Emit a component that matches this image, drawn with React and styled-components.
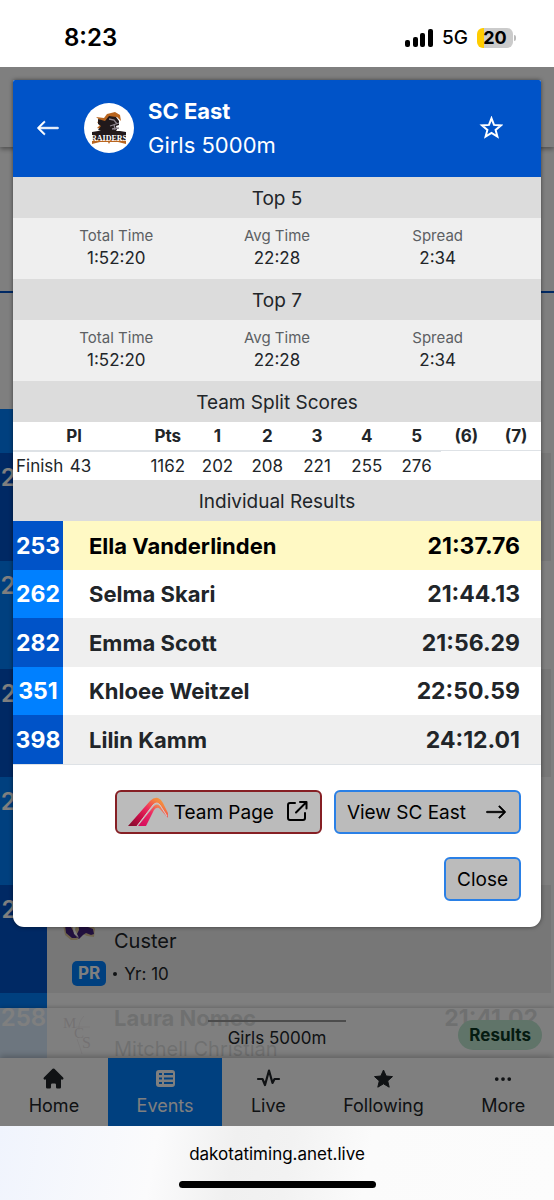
import React from 'react'
import styled, { createGlobalStyle, css } from 'styled-components'
import { BsArrowLeft, BsArrowRight, BsThreeDots } from 'react-icons/bs'
import { HiHome } from 'react-icons/hi'

const splits = [202, 208, 221, 255, 276]

const runners = [
    { place: 253, name: 'Ella Vanderlinden', time: '21:37.76', active: true },
    { place: 262, name: 'Selma Skari', time: '21:44.13' },
    { place: 282, name: 'Emma Scott', time: '21:56.29' },
    { place: 351, name: 'Khloee Weitzel', time: '22:50.59' },
    { place: 398, name: 'Lilin Kamm', time: '24:12.01' },
]

const entries = [
    { place: 253 },
    { place: 254 },
    { place: 255 },
    { place: 256 },
    { place: 257, team: 'Custer', year: 10, logo: 'custer' },
    { place: 258, name: 'Laura Nomec', team: 'Mitchell Christian', time: '21:41.02', logo: 'mcs' },
]

export default function App() {
    return (
        <Phone>
            <GlobalStyle />
            <StatusBar />
            <Screen>
                <EventPage />
                <Backdrop>
                    <TeamDialog />
                </Backdrop>
            </Screen>
            <BrowserBar>
                <Address>dakotatiming.anet.live</Address>
                <HomeIndicator />
            </BrowserBar>
        </Phone>
    )
}

function StatusBar() {
    return (
        <StatusWrapper>
            <Clock>8:23</Clock>
            <StatusIcons>
                <svg width="28" height="18" viewBox="0 0 28 18" aria-hidden="true">
                    <rect x="0" y="11" width="5" height="7" rx="2" />
                    <rect x="8" y="8" width="5" height="10" rx="2" />
                    <rect x="15" y="4" width="5" height="14" rx="2" />
                    <rect x="23" y="0" width="5" height="18" rx="2" />
                </svg>
                <Network>5G</Network>
                <BatteryWrapper>
                    <Battery>20</Battery>
                    <BatteryCap />
                </BatteryWrapper>
            </StatusIcons>
        </StatusWrapper>
    )
}

function EventPage() {
    return (
        <PageWrapper>
            <SiteHeader />
            <EventTabs />
            <Filters />
            <Content>
                <EntryList>
                    <ListHead />
                    {entries.map(entry => <Entry key={entry.place} {...entry} />)}
                </EntryList>
                <Sheet>
                    <SheetHandle />
                    <SheetTitle>Girls 5000m</SheetTitle>
                    <Results type="button">Results</Results>
                </Sheet>
            </Content>
            <Navbar />
        </PageWrapper>
    )
}

function Entry({ place, name, team, year, time, logo }) {
    return (
        <EntryRow>
            <EntryPlace>{place}</EntryPlace>
            <EntryInfo>
                <EntryLogo>
                    {logo === 'custer' && <CusterLogo />}
                    {logo === 'mcs' && <McsLogo />}
                </EntryLogo>
                <div>
                    <EntryName>{name}</EntryName>
                    <EntryTeam>{team}</EntryTeam>
                </div>
                <EntryTime>{time}</EntryTime>
                {year && (
                    <EntryMeta>
                        <Badge>PR</Badge>
                        <Bullet />
                        Yr: {year}
                    </EntryMeta>
                )}
            </EntryInfo>
        </EntryRow>
    )
}

function Navbar() {
    return (
        <NavWrapper>
            <NavLink href="#home"><HiHome size={25} />Home</NavLink>
            <NavLink href="#events" $active>
                <svg width="25" height="25" viewBox="0 0 25 25" aria-hidden="true">
                    <path fill="currentColor" fillRule="evenodd" d="M6 4h13a3 3 0 0 1 3 3v11a3 3 0 0 1-3 3H6a3 3 0 0 1-3-3V7a3 3 0 0 1 3-3zM6 7v2h3V7zM11 7v2h9V7zM6 11.500v2h3v-2zM11 11.500v2h9v-2zM6 16v2h3v-2zM11 16v2h9v-2z" />
                </svg>
                Events
            </NavLink>
            <NavLink href="#live">
                <svg width="25" height="25" viewBox="0 0 25 25" fill="none" stroke="currentColor" strokeWidth="2.200" strokeLinecap="round" strokeLinejoin="round" aria-hidden="true">
                    <path d="M2 13h4.500l2.500 6 4-14.500 3.500 12.500 2-4H23" />
                </svg>
                Live
            </NavLink>
            <NavLink href="#following">
                <svg width="25" height="25" viewBox="0 0 25 25" fill="currentColor" stroke="currentColor" strokeLinejoin="round" aria-hidden="true">
                    <path d="M12.500 4l2.700 6 6.300.6-4.800 4.300 1.500 6.300-5.700-3.400-5.700 3.400 1.500-6.300-4.800-4.300 6.300-.6z" />
                </svg>
                Following
            </NavLink>
            <NavLink href="#more">
                <DotsSlot><BsThreeDots size={20} /></DotsSlot>
                More
            </NavLink>
        </NavWrapper>
    )
}

function TeamDialog() {
    return (
        <Dialog role="dialog" aria-label="SC East">
            <DialogHeader>
                <IconButton type="button" aria-label="Back"><BsArrowLeft size={24} strokeWidth="0.500" /></IconButton>
                <Avatar><RaidersLogo /></Avatar>
                <Heading>
                    <TeamName>SC East</TeamName>
                    <EventName>Girls 5000m</EventName>
                </Heading>
                <IconButton type="button" aria-label="Follow">
                    <svg width="24" height="24" viewBox="0 0 24 24" fill="none" stroke="currentColor" strokeWidth="2" aria-hidden="true">
                        <path d="M12.500 2.300l2.500 6.600 7 .5-5.400 4.500 1.800 6.700-5.900-3.700-5.900 3.700 1.800-6.700L3 9.400l7-.5z" />
                    </svg>
                </IconButton>
            </DialogHeader>
            <SectionTitle>Top 5</SectionTitle>
            <Stats />
            <SectionTitle>Top 7</SectionTitle>
            <Stats />
            <SectionTitle>Team Split Scores</SectionTitle>
            <SplitTable>
                <colgroup>
                    <col style={{ width: '10.2%' }} />
                    <col style={{ width: '14.4%' }} />
                </colgroup>
                <thead>
                    <tr>
                        <PlaceHead colSpan={2}>Pl</PlaceHead>
                        <th>Pts</th>
                        <th>1</th>
                        <th>2</th>
                        <th>3</th>
                        <th>4</th>
                        <th>5</th>
                        <th>(6)</th>
                        <th>(7)</th>
                    </tr>
                </thead>
                <tbody>
                    <tr>
                        <LeftCell>Finish</LeftCell>
                        <LeftCell>43</LeftCell>
                        <td>1162</td>
                        {splits.map(split => <td key={split}>{split}</td>)}
                    </tr>
                </tbody>
            </SplitTable>
            <SectionTitle>Individual Results</SectionTitle>
            <ResultTable>
                <tbody>
                    {runners.map(runner => (
                        <ResultRow key={runner.place} $active={runner.active}>
                            <PlaceCell>{runner.place}</PlaceCell>
                            <NameCell>{runner.name}</NameCell>
                            <TimeCell>{runner.time}</TimeCell>
                        </ResultRow>
                    ))}
                </tbody>
            </ResultTable>
            <DialogFooter>
                <Button type="button" $red>
                    <AthleticLogo />
                    Team Page
                    <ShareIcon />
                </Button>
                <Button type="button">
                    View SC East
                    <ArrowSlot><BsArrowRight size={22} strokeWidth="0.500" /></ArrowSlot>
                </Button>
                <Button type="button">Close</Button>
            </DialogFooter>
        </Dialog>
    )
}

function Stats() {
    return (
        <StatsWrapper>
            <div><dt>Total Time</dt><dd>1:52:20</dd></div>
            <div><dt>Avg Time</dt><dd>22:28</dd></div>
            <div><dt>Spread</dt><dd>2:34</dd></div>
        </StatsWrapper>
    )
}

function RaidersLogo() {
    return (
        <svg width="34" height="34" viewBox="0 0 34 34" aria-hidden="true">
            <path fill="#b8651f" d="M4 6l8 1 3-4 8-2 5 3 1 6-4-4-8 1-4 5 1 5-6 6 1-5-4-1 3-3-3-3 4-1z" />
            <path fill="#21191b" d="M6 8l7 2 4-5 7 1 3 4v4l-3 1 1 4-5 4H11l-6 2 4-5-3-1 3-4-3-2z" />
            <path fill="none" stroke="#8f8790" strokeWidth="1.300" d="M17 8l5 1 3 4M18 15l9-3M20 18l7-1M22 13l1 6" />
            <path fill="#21191b" d="M0 21l6-1h22l6 1v9H0z" />
            <path fill="#b8651f" d="M0 29h34v4l-8-2h-8l-1 2-1-2H8l-8 2z" />
            <LogoText x="17" y="30" textAnchor="middle">RAIDERS</LogoText>
        </svg>
    )
}

function CusterLogo() {
    return (
        <svg width="34" height="34" viewBox="0 0 34 34" aria-hidden="true">
            <path fill="#dcc79a" d="M1 18l4-8 10-4 12 4 6 12-1 8-7-1-4-2-6 6H9l-6-5z" />
            <path fill="#43217c" d="M3 18l4-8 3 2-1 8 6 11h-5l-6-5z" />
            <path fill="#43217c" d="M16 12l7-1 6 5-3 4 5 2 1 5-3 1-5-2-3 2-4 4-3-3 3-6z" />
            <path fill="#fff" d="M10 16l5-2-2 9 4 8-5-4z" />
        </svg>
    )
}

function McsLogo() {
    return (
        <McsSvg width="34" height="40" viewBox="0 0 34 40" aria-hidden="true">
            <text x="1" y="13" fontSize="15">M</text>
            <text x="12" y="23" fontSize="15">C</text>
            <text x="20" y="33" fontSize="16">S</text>
            <path fill="none" stroke="currentColor" strokeWidth="0.500" d="M14 12h14M22 1q-6 6-5 14M15 24q3 8 5 15" />
        </McsSvg>
    )
}

function AthleticLogo() {
    return (
        <svg width="40" height="30" viewBox="0 0 40 30" aria-hidden="true">
            <defs>
                <linearGradient id="outer" x1="0" y1="1" x2="1" y2="0">
                    <stop offset="0" stopColor="#7d0b2a" />
                    <stop offset="0.300" stopColor="#c60c46" />
                    <stop offset="0.550" stopColor="#ee2b5d" />
                    <stop offset="0.800" stopColor="#f5853f" />
                    <stop offset="1" stopColor="#f0a73c" />
                </linearGradient>
                <linearGradient id="inner" x1="0" y1="1" x2="0.800" y2="0">
                    <stop offset="0" stopColor="#d3095c" />
                    <stop offset="0.600" stopColor="#ec2b63" />
                    <stop offset="1" stopColor="#f79a49" />
                </linearGradient>
            </defs>
            <path fill="url(#outer)" d="M0 29L22 4q4-4 8-3 3 1 5 5l5 10v5l-8-13q-3-4-7 0L9 29z" />
            <path fill="url(#inner)" d="M10 29L26 9q3-3 6 0l7 11-7-8q-3-3-6 1L18 29z" />
            <path fill="none" stroke="#d9c4c4" d="M9 29L25 8q4-4 7 0l7 11" />
        </svg>
    )
}

function ShareIcon() {
    return (
        <svg width="22" height="22" viewBox="0 0 22 22" fill="none" stroke="currentColor" strokeWidth="2" strokeLinecap="round" strokeLinejoin="round" aria-hidden="true">
            <path d="M9 2H4a2 2 0 0 0-2 2v13a2 2 0 0 0 2 2h13a2 2 0 0 0 2-2v-5M14 1h6.500v6.500M20 1.500L10 11.500" />
        </svg>
    )
}

const GlobalStyle = createGlobalStyle`
    *{
        box-sizing: border-box;
    }
    body{
        margin: 0;
        background: #fff;
        color: #212529;
        font-family: Inter, "Liberation Sans", sans-serif;
    }
    button{
        font-family: inherit;
    }
    svg{
        flex: none;
    }
`

const Phone = styled.div`
    display: flex;
    flex-direction: column;
    height: 100vh;
`

const StatusWrapper = styled.header`
    display: flex;
    justify-content: space-between;
    align-items: center;
    height: 67px;
    padding: 8px 38px 0 64px;
    color: #000;
`

const Clock = styled.span`
    font-size: 24px;
    font-weight: 600;
`

const StatusIcons = styled.div`
    display: flex;
    align-items: center;
    gap: 9px;
`

const Network = styled.span`
    font-size: 19px;
    font-weight: 500;
`

const BatteryWrapper = styled.div`
    display: flex;
    align-items: center;
    gap: 1px;
`

const Battery = styled.span`
    width: 36px;
    border-radius: 6px;
    background: linear-gradient(to right, #ffcc00 20%, #cbcbcb 20%);
    font-size: 18px;
    font-weight: 700;
    line-height: 20px;
    text-align: center;
`

const BatteryCap = styled.span`
    width: 2px;
    height: 6px;
    border-radius: 0 2px 2px 0;
    background: #bbb;
`

const Screen = styled.main`
    display: grid;
    grid-template: minmax(0, 1fr) / minmax(0, 1fr);
    flex: 1;
    min-height: 0;
    overflow: hidden;
    > *{
        grid-area: 1 / 1;
    }
`

const Backdrop = styled.div`
    z-index: 1;
    padding: 13px;
    background: rgba(0, 0, 0, 0.5);
    overflow: auto;
`

const PageWrapper = styled.div`
    display: flex;
    flex-direction: column;
    min-height: 0;
`

const SiteHeader = styled.div`
    flex: none;
    height: 80px;
    box-shadow: 0 2px 5px rgba(0, 0, 0, 0.4);
`

const EventTabs = styled.div`
    flex: none;
    height: 146px;
    border-bottom: 2px solid #0053c8;
`

const Filters = styled.div`
    flex: none;
    height: 116px;
`

const Content = styled.div`
    display: grid;
    grid-template: minmax(0, 1fr) / minmax(0, 1fr);
    flex: 1;
    min-height: 0;
    overflow: hidden;
    > *{
        grid-area: 1 / 1;
    }
`

const EntryList = styled.div`
    padding-right: 3px;
    overflow: hidden;
`

const ListHead = styled.div`
    width: 47px;
    height: 44px;
    background: #0080ff;
`

const EntryPlace = styled.div`
    width: 47px;
    padding-top: 10px;
    background: #0080ff;
    color: #fff;
    font-size: 24px;
    font-weight: 600;
    line-height: 30px;
    text-align: center;
`

const EntryRow = styled.div`
    display: flex;
    height: 108px;
    &:nth-child(even){
        background: #efefef;
    }
    &:nth-child(even) ${EntryPlace}{
        background: #0053c8;
    }
`

const EntryInfo = styled.div`
    display: grid;
    grid-template-columns: 67px 1fr auto;
    align-content: start;
    flex: 1;
    padding: 10px 13px 0 0;
`

const EntryLogo = styled.div`
    display: flex;
    justify-content: center;
    padding: 12px 3px 0 0;
`

const EntryName = styled.div`
    min-height: 30px;
    font-size: 22px;
    font-weight: 700;
    line-height: 30px;
`

const EntryTime = styled(EntryName)`
    font-size: 23px;
`

const EntryTeam = styled.div`
    min-height: 32px;
    font-size: 20px;
    line-height: 32px;
`

const EntryMeta = styled.div`
    display: flex;
    align-items: center;
    grid-column: 1 / -1;
    gap: 7px;
    padding: 4px 0 0 25px;
    font-size: 17px;
`

const Badge = styled.span`
    padding: 0 6px;
    border-radius: 5px;
    background: #0080ff;
    color: #fff;
    font-weight: 700;
    line-height: 25px;
`

const Bullet = styled.span`
    width: 4px;
    height: 4px;
    border-radius: 50%;
    background: #212529;
`

const McsSvg = styled.svg`
    color: #5c3844;
    fill: #5c3844;
    font-family: "Liberation Serif", serif;
`

const Sheet = styled.div`
    display: grid;
    grid-template-columns: 1fr auto 1fr;
    align-self: end;
    align-content: start;
    height: 50px;
    padding: 12px 12px 0;
    background: rgba(255, 255, 255, 0.86);
    box-shadow: 0 -1px 4px rgba(0, 0, 0, 0.2);
`

const SheetHandle = styled.div`
    grid-area: 1 / 2;
    justify-self: center;
    width: 138px;
    height: 2px;
    background: #999;
`

const SheetTitle = styled.span`
    grid-area: 1 / 2;
    padding-top: 6px;
    font-size: 17px;
    line-height: 24px;
    text-align: center;
`

const Results = styled.button`
    grid-area: 1 / 3;
    justify-self: end;
    padding: 0 11px;
    border: 0;
    border-radius: 15px;
    background: #c0e8d2;
    color: #0a3622;
    font-size: 17px;
    font-weight: 700;
    line-height: 29px;
`

const NavWrapper = styled.nav`
    display: flex;
    flex: none;
    height: 68px;
    box-shadow: 0 -2px 6px rgba(0, 0, 0, 0.25);
`

const NavLink = styled.a`
    display: flex;
    flex: 1 1 auto;
    flex-direction: column;
    align-items: center;
    justify-content: space-between;
    padding: 8px 0;
    color: #212529;
    font-size: 18px;
    line-height: 24px;
    text-decoration: none;
    ${props => props.$active && css`
        background: #0080ff;
        color: #fff;
    `}
`

const DotsSlot = styled.span`
    display: flex;
    align-items: center;
    height: 25px;
`

const Dialog = styled.section`
    border-radius: 2px 2px 11px 11px;
    background: #fff;
    box-shadow: 0 0 4px rgba(0, 0, 0, 0.5);
    overflow: hidden;
`

const DialogHeader = styled.header`
    display: flex;
    align-items: center;
    height: 97px;
    padding: 0 38px 1px 23px;
    background: #0053c8;
    color: #fff;
`

const IconButton = styled.button`
    display: flex;
    padding: 0;
    border: 0;
    background: transparent;
    color: inherit;
    svg{
        stroke: currentColor;
    }
`

const Avatar = styled.div`
    display: flex;
    align-items: center;
    justify-content: center;
    width: 50px;
    height: 50px;
    margin: 0 14px 0 24px;
    border-radius: 50%;
    background: #fff;
`

const LogoText = styled.text`
    fill: #fff;
    font-family: "Liberation Serif", serif;
    font-size: 8px;
    font-weight: 700;
`

const Heading = styled.div`
    flex: 1;
    font-size: 22px;
    line-height: 34px;
`

const TeamName = styled.h1`
    margin: 0;
    font-size: inherit;
    font-weight: 700;
`

const EventName = styled.p`
    margin: 0;
`

const SectionTitle = styled.h2`
    margin: 0;
    padding-top: 2px;
    background: #dcdcdc;
    font-size: 19px;
    font-weight: 400;
    line-height: 39px;
    text-align: center;
`

const StatsWrapper = styled.dl`
    display: grid;
    grid-template-columns: repeat(3, 1fr);
    margin: 0;
    padding: 6px 23px 9px;
    background: #efefef;
    line-height: 23px;
    text-align: center;
    dt{
        color: #5c5f63;
        font-size: 15px;
    }
    dd{
        margin: 0;
        font-size: 17px;
    }
`

const SplitTable = styled.table`
    width: 100%;
    border-collapse: separate;
    border-spacing: 0;
    table-layout: fixed;
    font-size: 17px;
    line-height: 28px;
    text-align: center;
    th{
        padding: 0;
        border-bottom: 1px solid #dee2e6;
        font-weight: 700;
    }
    td{
        padding: 0;
        border-top: 1px solid #dee2e6;
    }
`

const PlaceHead = styled.th`
    && {
        padding-right: 8px;
    }
`

const LeftCell = styled.td`
    && {
        padding-left: 3px;
    }
    text-align: left;
`

const ResultTable = styled.table`
    width: 100%;
    border-bottom: 1px solid #dee2e6;
    border-spacing: 0;
    font-size: 23px;
    font-weight: 700;
`

const PlaceCell = styled.td`
    width: 50px;
    padding: 0;
    background: #0080ff;
    color: #fff;
    text-align: center;
`

const ResultRow = styled.tr`
    height: 48px;
    &:nth-child(odd){
        height: 49px;
        background: #efefef;
    }
    &:nth-child(odd) ${PlaceCell}{
        background: #0053c8;
    }
    ${props => props.$active && css`
        &&{
            background: #fff9c4;
            color: #000;
        }
    `}
`

const NameCell = styled.td`
    padding: 0 0 0 26px;
    font-size: 22px;
`

const TimeCell = styled.td`
    padding: 0 21px 0 0;
    text-align: right;
`

const DialogFooter = styled.footer`
    display: flex;
    flex-wrap: wrap;
    justify-content: flex-end;
    gap: 23px 12px;
    padding: 25px 20px 26px;
`

const Button = styled.button`
    display: flex;
    align-items: center;
    gap: 6px;
    height: 44px;
    padding: 0 11px;
    border: 2px solid ${props => props.$red ? '#861f24' : '#2a80e6'};
    border-radius: 6px;
    background: #bbb;
    color: #000;
    font-size: 19px;
    svg:last-child:not(:first-child){
        margin: 0 1px 0 6px;
    }
`

const ArrowSlot = styled.span`
    display: flex;
    padding: 0 1px 0 13px;
    svg{
        stroke: currentColor;
    }
`

const BrowserBar = styled.footer`
    display: flex;
    flex-direction: column;
    align-items: center;
    justify-content: space-between;
    height: 74px;
    padding: 16px 0 12px;
    background: linear-gradient(100deg, #f0f4fd 0%, #fbfbfc 28%, #f0f0f0 42%, #f2f2f2 52%, #fbfbfb 66%, #fcfcfc 100%);
`

const Address = styled.span`
    color: #000;
    font-size: 17px;
    line-height: 24px;
`

const HomeIndicator = styled.div`
    width: 197px;
    height: 7px;
    border-radius: 4px;
    background: #000;
`
